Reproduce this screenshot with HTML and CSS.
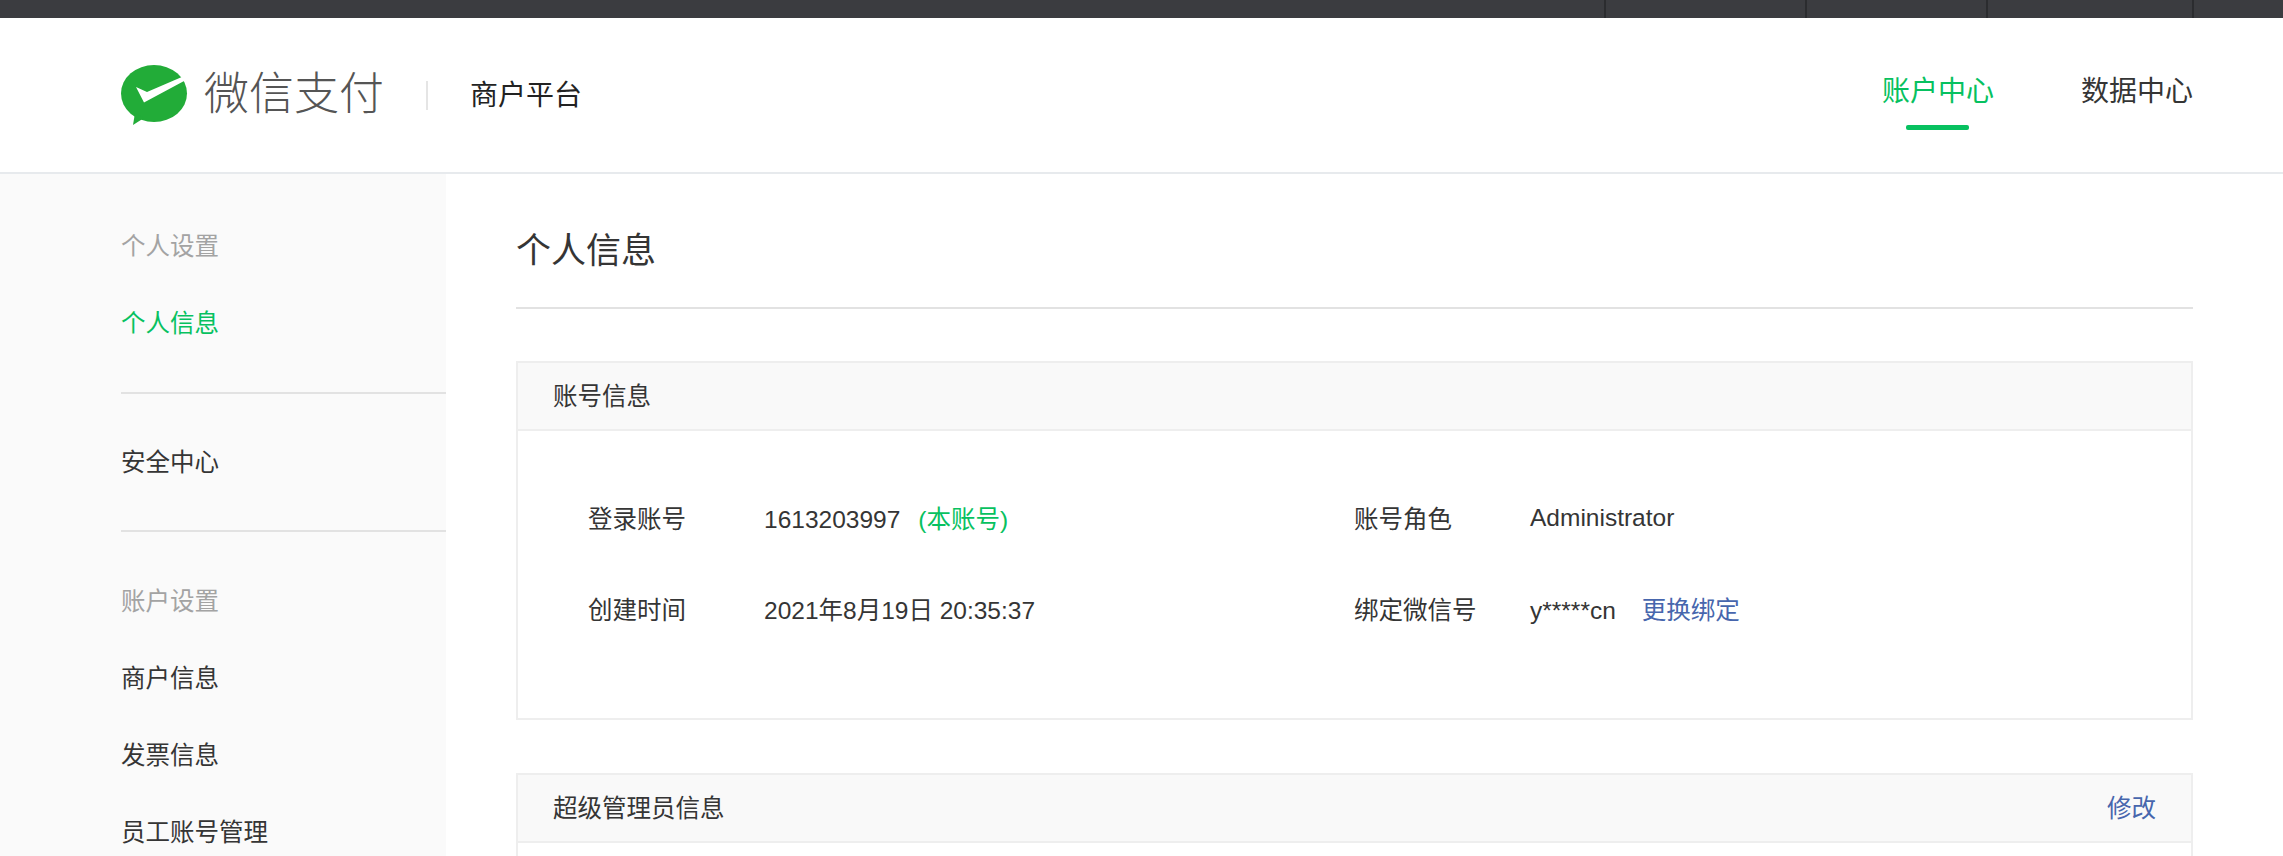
FILE: index.html
```html
<!DOCTYPE html>
<html lang="zh-CN">
<head>
    <meta charset="UTF-8">
    <title>微信支付 商户平台</title>
    <link rel="stylesheet" href="styles.css">
</head>
<body>
    <div class="top-bar">
        <span class="top-cell cell-a"></span>
        <span class="top-cell cell-b"></span>
        <span class="top-cell cell-c"></span>
        <span class="top-cell cell-d"></span>
    </div>
    <header class="header">
        <div class="brand">
            <svg class="logo-icon" viewBox="0 0 67 60" width="67" height="60">
                <ellipse cx="33" cy="28.5" rx="33" ry="28.5" fill="#22ac38"/>
                <path d="M14 48 L12 60 L23 53 Z" fill="#22ac38"/>
                <path d="M15 22 L26 27 L62 11.5 L64 15.5 L23 37.5 Z" fill="#fff"/>
            </svg>
            <span class="logo-text">微信支付</span>
            <span class="brand-sep"></span>
            <span class="brand-sub">商户平台</span>
        </div>
        <nav class="nav">
            <a class="nav-item active">账户中心</a>
            <a class="nav-item">数据中心</a>
        </nav>
    </header>
    <div class="layout">
        <aside class="sidebar">
            <div class="side-group">
                <div class="side-item muted">个人设置</div>
                <div class="side-item current">个人信息</div>
            </div>
            <div class="side-group short">
                <div class="side-item">安全中心</div>
            </div>
            <div class="side-group last">
                <div class="side-item muted">账户设置</div>
                <div class="side-item">商户信息</div>
                <div class="side-item">发票信息</div>
                <div class="side-item">员工账号管理</div>
            </div>
        </aside>
        <main class="main">
            <h1 class="page-title">个人信息</h1>
            <section class="box">
                <div class="box-head">账号信息</div>
                <div class="info-grid">
                    <div class="info-row">
                        <span class="info-label">登录账号</span>
                        <span>1613203997<span class="own-tag">(本账号)</span></span>
                    </div>
                    <div class="info-row">
                        <span class="info-label">账号角色</span>
                        <span>Administrator</span>
                    </div>
                    <div class="info-row">
                        <span class="info-label">创建时间</span>
                        <span>2021年8月19日 20:35:37</span>
                    </div>
                    <div class="info-row">
                        <span class="info-label">绑定微信号</span>
                        <span>y*****cn<a class="link rebind">更换绑定</a></span>
                    </div>
                </div>
            </section>
            <section class="box">
                <div class="box-head">
                    <span>超级管理员信息</span>
                    <a class="link">修改</a>
                </div>
                <div class="box-rest"></div>
            </section>
        </main>
    </div>
</body>
</html>
```

FILE: styles.css
```css
html, body {
    height: 100%;
    margin: 0;
    padding: 0;
    overflow: hidden;
    background: #fff;
    color: #353535;
    font-family: "Liberation Sans", "Noto Sans CJK SC", sans-serif;
    font-size: 24.5px;
}
.top-bar {
    display: flex;
    justify-content: flex-end;
    height: 18px;
    background: #3b3c40;
}
.top-cell {
    border-left: 2px solid #2b2c2f;
}
.cell-a { width: 199px; }
.cell-b { width: 179px; }
.cell-c { width: 204px; }
.cell-d { width: 89px; }
.header {
    display: flex;
    justify-content: space-between;
    align-items: center;
    height: 154px;
    padding: 0 90px 0 121px;
    border-bottom: 2px solid #e7eaed;
}
.brand {
    display: flex;
    align-items: center;
}
.logo-icon {
    display: block;
}
.logo-text {
    margin-left: 16px;
    color: #555;
    font-size: 45px;
    font-weight: 300;
    line-height: 60px;
}
.brand-sep {
    width: 2px;
    height: 29px;
    margin: 0 42px;
    background: #e5e5e5;
}
.brand-sub {
    margin-bottom: 4px;
    font-size: 28px;
    color: #222;
}
.nav {
    display: flex;
    gap: 87px;
    margin-bottom: 12px;
}
.nav-item {
    position: relative;
    font-size: 28px;
}
.nav-item.active {
    color: #07c160;
}
.nav-item.active::after {
    content: "";
    position: absolute;
    left: 24px;
    bottom: -21px;
    width: 63px;
    height: 5px;
    border-radius: 2px;
    background: #07c160;
}
.layout {
    display: flex;
    height: 700px;
}
.sidebar {
    box-sizing: border-box;
    flex: 0 0 446px;
    padding: 4px 0 0 121px;
    background: #fafafa;
}
.side-group {
    padding: 30px 0;
    border-bottom: 2px solid #e2e2e2;
}
.side-group.short {
    padding-bottom: 29px;
}
.side-group.last {
    padding-top: 31px;
    border-bottom: none;
}
.side-item {
    height: 77px;
    line-height: 77px;
}
.side-item.muted {
    color: #a3a3a3;
}
.side-item.current {
    color: #07c160;
}
.main {
    flex: 1;
    min-width: 0;
    padding: 0 90px 0 70px;
}
.page-title {
    height: 83px;
    margin: 0 0 52px;
    padding-top: 50px;
    line-height: 54px;
    border-bottom: 2px solid #e2e2e2;
    font-size: 35px;
    font-weight: 400;
}
.box {
    margin-bottom: 53px;
    border: 2px solid #eee;
}
.box-head {
    display: flex;
    justify-content: space-between;
    align-items: center;
    height: 62px;
    padding: 0 35px 4px;
    border-bottom: 2px solid #eee;
    background: #f9f9f9;
}
.info-grid {
    display: grid;
    grid-template-columns: 766px 1fr;
    grid-auto-rows: 91px;
    padding: 41px 0 64px 70px;
}
.info-row {
    display: flex;
    align-items: center;
}
.info-label {
    flex: 0 0 176px;
}
.own-tag {
    margin-left: 18px;
    color: #07c160;
}
.link {
    color: #4766ad;
}
.rebind {
    margin-left: 26px;
}
.box-rest {
    height: 200px;
}
```
